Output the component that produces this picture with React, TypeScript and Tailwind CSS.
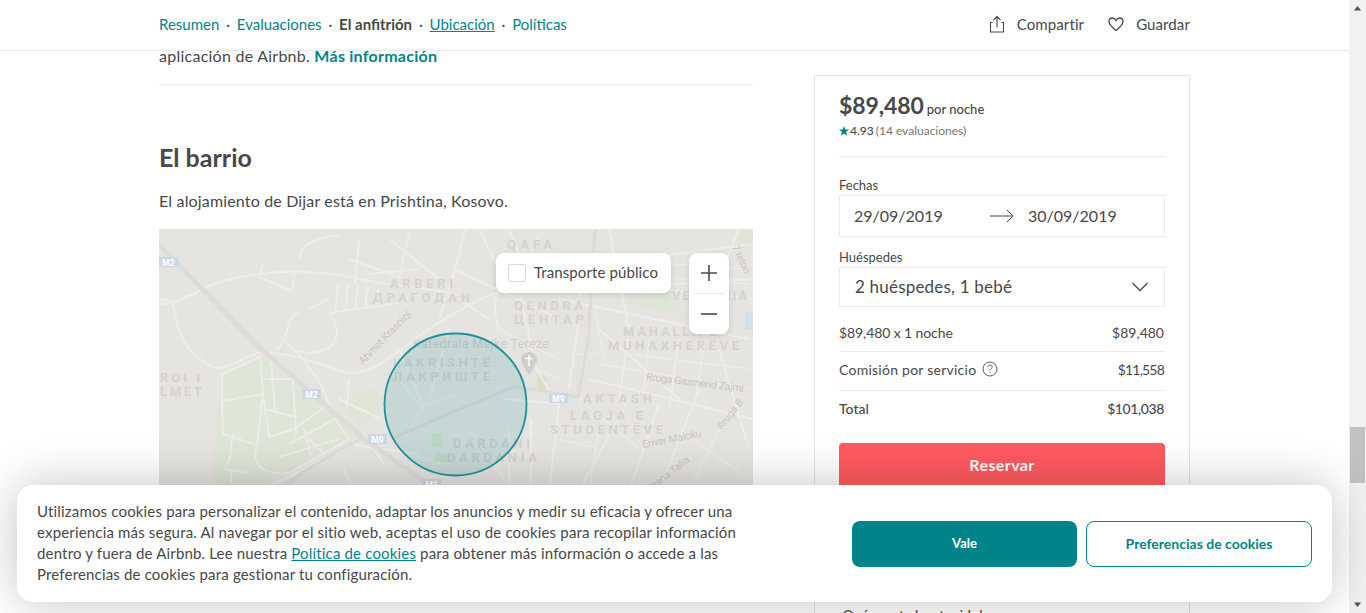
import React from "react";

const F = "font-['Lato','Noto_Sans',sans-serif]";

const roads: string[] = [
  "M0 70 C30 76 20 66 34 66 C55 48 130 34 200 50 C240 58 280 60 300 66",
  "M0 75 L14 74 C18 100 22 120 50 136 C60 146 80 130 101 123",
  "M101 123 C140 124 170 140 190 144 C215 146 240 120 270 100 C300 80 320 70 345 60",
  "M170 84 C190 110 170 130 134 122",
  "M118 120 C132 110 124 90 140 83",
  "M104 36 L100 48 L132 62 L136 44",
  "M170 84 L240 74 M179 55 L176 84 M189 55 L186 84 M199 56 L196 82 M209 58 L206 80 M219 60 L216 78",
  "M142 30 C138 20 150 10 180 6 M200 10 C200 30 196 40 196 55 M230 10 L280 50 M250 5 L240 50",
  "M190 30 L240 48 M210 45 L260 40 M150 80 L170 70",
  "M63 145 L101 128 L104 165 L63 172 Z",
  "M63 172 L64 205 L98 216 L104 165 L110 208 L135 200 L170 175 L160 152 L142 128 L122 108",
  "M104 150 L134 150 L137 205 M112 132 L116 182 M106 180 L137 188",
  "M98 216 C90 240 110 246 130 244 L190 210 L176 190 L130 215",
  "M150 210 L165 225 M120 228 L180 210 M145 200 L152 226",
  "M74 205 C70 220 74 225 68 235 M64 240 L90 244 M72 240 L72 254",
  "M204 209 C170 225 130 250 100 262",
  "M204 204 L225 235 M195 216 L260 225 M185 240 L195 262",
  "M180 170 L222 190 M190 150 L188 178",
  "M360 25 C340 50 330 70 340 100 M306 0 C300 30 290 60 280 90 M380 5 L360 60 L375 130",
  "M295 40 L400 90 M300 70 L330 90 M320 0 L340 40 M350 0 L370 50 L440 60 L594 50",
  "M400 70 L590 110 M420 90 L410 160 M440 100 L520 170 M470 105 L460 170 M520 110 L510 180",
  "M430 150 L594 190 M470 170 L420 262 M500 175 L470 262 M540 160 L500 262 M560 120 L590 220",
  "M360 110 L395 170 M345 170 L400 175 L390 262 M350 200 L350 262 M372 190 L372 262",
  "M290 100 L270 170 M240 120 L265 180",
  "M480 30 L594 15 M500 60 L594 70 M450 0 L470 100 M580 0 L540 100 M430 30 L420 70",
];

const thin: string[] = [
  "M240 150 L262 178 L250 205 M262 178 L300 165 M250 225 L300 240 M310 200 L345 250",
  "M340 100 L400 130 M355 130 L400 150 M420 170 L480 220",
  "M400 210 L440 220 M440 200 L430 262 M520 200 L590 250 M560 200 L530 262",
  "M440 30 L590 40 M460 45 L590 55 M470 125 L590 140 M440 135 L590 160",
  "M435 75 L445 130 M490 110 L485 160 M545 115 L535 180 M410 125 L440 125",
];

const labels: [number, number, string, number][] = [
  [348, 20, "QAFA", 45],
  [231, 59, "ARBERI", 63],
  [214, 73, "ДРАГОДАН", 97],
  [355, 81, "QENDRA", 69],
  [355, 95, "ЦЕНТАР", 70],
  [513, 71, "VETERNIA", 75],
  [464, 107, "MAHALLA E", 94],
  [449, 121, "MUHAXHERËVE", 131],
  [234, 138, "LAKRISHTË", 97],
  [234, 152, "ЛАКРИШТЕ", 97],
  [424, 174, "AKTASH", 69],
  [411, 191, "LAGJA E", 73],
  [391, 205, "STUDENTËVE", 113],
  [294, 219, "DARDANI", 77],
  [288, 233, "DARDANIA", 90],
  [1, 153, "ROI I", 40],
  [1, 167, "LMËT", 42],
];

const streets: [string, number, number, number, number, number][] = [
  ["Ahmet Krasniqi", 204, 136, -46, 70, 10.5],
  ["Rruga Gazmend Zajmi", 487, 151, 7, 98, 10.5],
  ["Enver Maloku", 484, 219, -11, 60, 10.5],
  ["Rruga B", 563, 201, -52, 35, 10],
  ["7 tetori", 573, 18, 65, 30, 10],
  ["Tirana Talia", 490, 264, -38, 52, 10],
];

const shields: [number, number, string][] = [
  [0, 28, "M2"],
  [143, 160, "M2"],
  [209, 205, "M9"],
  [263, 250, "M3"],
  [390, 164, "M9"],
];

function MapArt() {
  return (
    <svg viewBox="0 0 594 280" width="594" height="280" className="block">
      <rect width="594" height="280" fill="#e6e4e0" />
      <path d="M61 144 L101 126 L204 203 L91 262 L52 262 Z" fill="#dfe5d7" />
      <path d="M178 173 L211 158 L224 169 L204 199 Z" fill="#dfe5d7" />
      <path d="M469 59 L490 30 L505 45 L524 86 L471 76 Z" fill="#dfe5d7" />
      <path d="M578 1 L594 1 L594 21 L581 21 Z" fill="#dfe5d7" />
      <path d="M331 36 L348 40 L348 59 L335 59 Z" fill="#dfe5d7" />
      <path d="M586 83 L594 83 L594 101 L586 101 Z" fill="#cfe0e8" />
      <path d="M378 143 L388 148 L387 161 L378 160 Z" fill="#d5e2c8" />
      <path d="M273 204 H283 V218 H273 Z M276 224 H288 V233 H276 Z" fill="#d5e4cb" />
      {roads.map((d, i) => (
        <path key={i} d={d} fill="none" stroke="#eeece8" strokeWidth="2" />
      ))}
      {thin.map((d, i) => (
        <path key={i} d={d} fill="none" stroke="#eeece8" strokeWidth="1.2" />
      ))}
      <path d="M0 16 L101 119 L204 209 L262 250 L300 280" fill="none" stroke="#dedcd8" strokeWidth="5" />
      <path d="M204 209 C170 225 130 250 100 280" fill="none" stroke="#dedcd8" strokeWidth="3" />
      <path d="M236 208 L294 183 L354 158 L368 159 L419 168 L429 113 L436 0" fill="none" stroke="#dedcd8" strokeWidth="3" />
      {shields.map(([x, y, t]) => (
        <g key={`${x}-${y}`}>
          <rect x={x} y={y} width={19} height={10} fill="#ccd8e6" />
          <text x={x + 9.5} y={y + 8.5} textAnchor="middle" fontSize="8.5" fontWeight="700" fill="#fff" fontFamily="Roboto, sans-serif">
            {t}
          </text>
        </g>
      ))}
      {labels.map(([x, y, t, w]) => (
        <text
          key={t}
          x={x}
          y={y}
          fontSize="13"
          fontWeight="700"
          textLength={w}
          lengthAdjust="spacing"
          fill="#d4d3cf"
          fontFamily="Roboto, sans-serif"
        >
          {t}
        </text>
      ))}
      <text x="254" y="119" fontSize="12.5" textLength="136" fill="#cdccc8" fontFamily="Roboto, sans-serif">
        Katedrala Majke Tereze
      </text>
      {streets.map(([t, x, y, r, w, s]) => (
        <text
          key={t}
          x="0"
          y="0"
          fontSize={s}
          textLength={w}
          fill="#c8c7c3"
          fontFamily="Roboto, sans-serif"
          transform={`translate(${x} ${y}) rotate(${r})`}
        >
          {t}
        </text>
      ))}
      <circle cx="370" cy="131" r="8" fill="#d0cfcb" />
      <path d="M364 137 L370 146 L376 137 Z" fill="#d0cfcb" />
      <path d="M370 126 V137 M366.5 129.5 H373.5" stroke="#fff" strokeWidth="1.4" />
      <circle cx="296.5" cy="175.5" r="71" fill="#0a8f9a" fillOpacity="0.14" stroke="#1e9496" strokeWidth="1.8" />
    </svg>
  );
}

export default function App() {
  return (
    <div className={`${F} relative flex h-[613px] w-full overflow-hidden bg-white text-[#484848]`}>
      <div className="flex min-w-0 flex-1 flex-col">
        <header className="relative z-10 flex h-[51px] shrink-0 items-center justify-between border-b border-[#ebebeb] bg-white pb-[2px] pl-[159px] pr-[159px] text-[15px]">
          <nav className="flex items-center gap-[6.8px] text-[#008489]">
            <span>Resumen</span>
            <span className="text-[#484848]">·</span>
            <span>Evaluaciones</span>
            <span className="text-[#484848]">·</span>
            <span className="font-bold text-[#484848]">El anfitrión</span>
            <span className="text-[#484848]">·</span>
            <span className="underline">Ubicación</span>
            <span className="text-[#484848]">·</span>
            <span>Políticas</span>
          </nav>
          <div className="flex items-center tracking-[0.1px]">
            <svg viewBox="0 0 16 18" width="16" height="18" fill="none" stroke="#484848" strokeWidth="1.1" className="mr-[12px]">
              <path d="M3.5 7.5H1.5V17H14.5V7.5H12.5M8 12.5V1.5M4.5 5L8 1.5L11.5 5" />
            </svg>
            <span>Compartir</span>
            <svg viewBox="0 0 16 16" width="16" height="16" fill="none" stroke="#484848" strokeWidth="1.3" className="ml-[24px] mr-[12px]">
              <path d="M8 14.5C5 12 1 9 1 5.5C1 3.3 2.7 2 4.4 2C6 2 7.3 3 8 4.5C8.7 3 10 2 11.6 2C13.3 2 15 3.3 15 5.5C15 9 11 12 8 14.5Z" />
            </svg>
            <span>Guardar</span>
          </div>
        </header>

        <div className="flex items-start justify-between pl-[159px] pr-[159px]">
          <main className="-mt-[6px] w-[594px]">
            <p className="text-[16px] leading-[22px] tracking-[0.25px] text-[#484848]">
              aplicación de Airbnb. <span className="font-bold text-[#008489]">Más información</span>
            </p>
            <div className="mt-[17px] h-px bg-[#ebebeb]" />
            <h2 className="mt-[55px] text-[25px] font-bold leading-[34px] text-[#484848]">El barrio</h2>
            <p className="mt-[16px] text-[16px] leading-[22px] tracking-[0.16px]">El alojamiento de Dijar está en Prishtina, Kosovo.</p>
            <div className="relative mt-[17px] h-[280px] w-[594px] overflow-hidden">
              <MapArt />
              <div className="absolute left-[337px] top-[24px] flex h-[40px] w-[175px] items-center rounded-[8px] bg-white pb-[1px] pl-[12px] text-[15px] tracking-[0.1px] shadow-[0_2px_6px_rgba(0,0,0,0.12)]">
                <span className="mr-[8px] h-[18px] w-[18px] rounded-[2px] border border-[#dbdbdb] bg-white" />
                Transporte público
              </div>
              <div className="absolute left-[530px] top-[24px] flex h-[81px] w-[40px] flex-col items-center rounded-[8px] bg-white shadow-[0_2px_6px_rgba(0,0,0,0.12)]">
                <svg viewBox="0 0 16 16" width="16" height="16" stroke="#484848" strokeWidth="1.6" className="mt-[12px]">
                  <path d="M8 0V16M0 8H16" />
                </svg>
                <div className="mt-[12px] h-px w-[32px] bg-[#ebebeb]" />
                <svg viewBox="0 0 16 16" width="16" height="16" stroke="#484848" strokeWidth="1.6" className="mt-[12px]">
                  <path d="M0 8H16" />
                </svg>
              </div>
            </div>
          </main>

          <aside className="mt-[24px] h-[560px] w-[376px] shrink-0 border border-[#e4e4e4] px-[24px] pt-[14px]">
            <div className="flex items-baseline gap-[3px]">
              <span className="text-[23px] font-bold leading-[30px] tracking-[-0.1px]">$89,480</span>
              <span className="text-[13px] font-medium">por noche</span>
            </div>
            <div className="mt-[3px] flex items-center text-[12px] leading-[16px]">
              <svg viewBox="0 0 12 12" width="10" height="10" fill="#008489">
                <path d="M6 0L7.6 4.2H12L8.5 7L9.8 11.6L6 9L2.2 11.6L3.5 7L0 4.2H4.4Z" />
              </svg>
              <span className="ml-[1px] font-medium">4.93</span>
              <span className="ml-[2px] text-[#767676]">(14 evaluaciones)</span>
            </div>
            <div className="mt-[17px] h-px bg-[#ebebeb]" />
            <div className="mt-[20px] text-[13px] leading-[16px]">Fechas</div>
            <div className="mt-[2px] flex h-[42px] items-center border border-[#ebebeb] pl-[14px] text-[16px]">
              <span className="w-[136px]">29/09/2019</span>
              <svg viewBox="0 0 24 14" width="24" height="14" fill="none" stroke="#484848" strokeWidth="1" className="mr-[14px]">
                <path d="M0 7H23M17 1L23 7L17 13" />
              </svg>
              <span>30/09/2019</span>
            </div>
            <div className="mt-[12px] text-[13px] leading-[16px]">Huéspedes</div>
            <div className="mt-[2px] flex h-[40px] items-center justify-between border border-[#ebebeb] pl-[15px] pr-[16px] text-[17px]">
              <span className="tracking-[0.2px]">2 huéspedes, 1 bebé</span>
              <svg viewBox="0 0 16 10" width="16" height="10" fill="none" stroke="#484848" strokeWidth="1.3">
                <path d="M0.5 1L8 8.5L15.5 1" />
              </svg>
            </div>
            <div className="flex h-[44px] items-center justify-between pt-[6px] text-[14px]">
              <span className="tracking-[-0.1px]">$89,480 x 1 noche</span>
              <span className="pr-[1px]">$89,480</span>
            </div>
            <div className="flex h-[39px] items-center justify-between border-t border-[#ebebeb] pb-[4px] text-[14px]">
              <div className="flex items-center gap-[6px] tracking-[0.25px]">
                Comisión por servicio
                <svg viewBox="0 0 16 16" width="16" height="16" fill="none" stroke="#484848" strokeWidth="0.9">
                  <circle cx="8" cy="8" r="7" />
                  <path d="M5.8 6.2C5.8 4.8 7 4.1 8 4.1C9.2 4.1 10.2 5 10.2 6.1C10.2 7.7 8 7.8 8 9.6M8 11V12" />
                </svg>
              </div>
              <span className="pr-[1px] tracking-[-0.8px]">$11,558</span>
            </div>
            <div className="flex h-[37px] items-center justify-between border-t border-[#ebebeb] pb-[2px] text-[14px] font-medium">
              <span>Total</span>
              <span className="pr-[1px] tracking-[-0.4px]">$101,038</span>
            </div>
            <button className="mt-[16px] flex h-[46px] w-full items-center justify-center rounded-[4px] bg-[#ff5a5f] pb-[2px] text-[16px] font-bold tracking-[0.4px] text-white">
              Reservar
            </button>
            <div className="mt-[117px] text-[14px] font-medium leading-[18px]">¡Qué suerte has tenido!</div>
          </aside>
        </div>
      </div>

      <div className="flex w-[17px] shrink-0 flex-col bg-[#f1f1f1]">
        <svg viewBox="0 0 17 17" width="17" height="17" fill="#505050">
          <path d="M8.5 6L12 10.5H5Z" />
        </svg>
        <div className="mx-auto mt-[410px] h-[56px] w-[15px] bg-[#c1c1c1]" />
        <svg viewBox="0 0 17 17" width="17" height="17" fill="#505050" className="mt-auto">
          <path d="M8.5 11L12 6.5H5Z" />
        </svg>
      </div>

      <div className="absolute left-[17px] top-[485px] z-20 flex h-[117px] w-[1315px] items-center rounded-[16px] bg-white pl-[20px] pr-[20px] shadow-[0_0_48px_rgba(0,0,0,0.24)]">
        <p className="mb-[2px] w-[720px] text-[15px] leading-[21px] tracking-[0.17px] text-[#484848]">
          Utilizamos cookies para personalizar el contenido, adaptar los anuncios y medir su eficacia y ofrecer una experiencia más segura. Al navegar por el sitio web, aceptas el uso de cookies para recopilar información dentro y fuera de Airbnb. Lee nuestra <span className="text-[#008489] underline">Política de cookies</span> para obtener más información o accede a las Preferencias de cookies para gestionar tu configuración.
        </p>
        <button className="ml-auto flex h-[46px] w-[225px] items-center justify-center rounded-[8px] bg-[#008489] text-[13px] font-bold text-white">
          Vale
        </button>
        <button className="ml-[9px] flex h-[46px] w-[226px] items-center justify-center rounded-[8px] border border-[#008489] bg-white text-[14px] font-bold text-[#008489]">
          Preferencias de cookies
        </button>
      </div>
    </div>
  );
}
